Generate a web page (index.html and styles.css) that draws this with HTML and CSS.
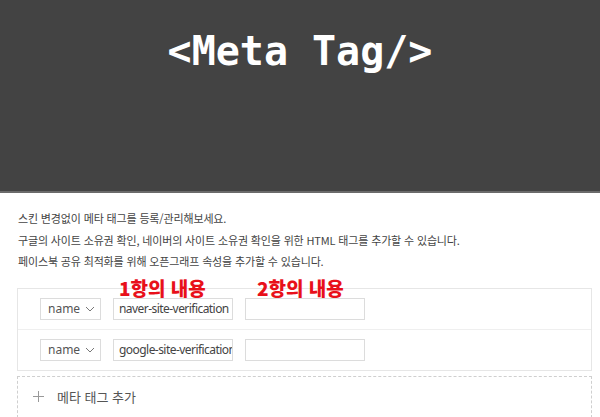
FILE: index.html
```html
<!DOCTYPE html>
<html lang="ko">
<head>
  <meta charset="UTF-8" />
  <title>Meta Tag</title>
  <meta name="viewport" content="width=device-width, initial-scale=1.0" />
  <link rel="stylesheet" href="styles.css">
</head>
<body>

  <div class="banner">
    <h1>&lt;Meta Tag/&gt;</h1>
  </div>

  <div class="content">
    <div class="intro">
      <p>스킨 변경없이 메타 태그를 등록/관리해보세요.</p>
      <p>구글의 사이트 소유권 확인, 네이버의 사이트 소유권 확인을 위한 HTML 태그를 추가할 수 있습니다.</p>
      <p>페이스북 공유 최적화를 위해 오픈그래프 속성을 추가할 수 있습니다.</p>
    </div>

    <div class="tag-list">
      <span class="note note-1">1항의 내용</span>
      <span class="note note-2">2항의 내용</span>

      <div class="tag-row">
        <div class="select">
          <span>name</span>
          <svg width="10" height="6" viewBox="0 0 10 6"><path d="M1 1l4 4 4-4" fill="none" stroke="#777" stroke-width="1"/></svg>
        </div>
        <input class="field" type="text" value="naver-site-verification" />
        <input class="field" type="text" value="" />
      </div>

      <div class="tag-row">
        <div class="select">
          <span>name</span>
          <svg width="10" height="6" viewBox="0 0 10 6"><path d="M1 1l4 4 4-4" fill="none" stroke="#777" stroke-width="1"/></svg>
        </div>
        <input class="field" type="text" value="google-site-verification" />
        <input class="field" type="text" value="" />
      </div>
    </div>

    <div class="add-tag">
      <svg class="plus" width="11" height="11" viewBox="0 0 11 11"><path d="M5.5 0v11M0 5.5h11" stroke="#999" stroke-width="1"/></svg>
      <span>메타 태그 추가</span>
    </div>
  </div>

</body>
</html>
```

FILE: styles.css
```css
body {
  margin: 0;
  font-family: 'Noto Sans CJK KR', 'Noto Sans', sans-serif;
  color: #444;
  background: #fff;
}
.banner {
  height: 191px;
  background: #434343;
  border-bottom: 2px solid #6b6b6b;
}
.banner h1 {
  margin: 0;
  padding-top: 28px;
  text-align: center;
  font-family: 'DejaVu Sans Mono', monospace;
  font-weight: bold;
  font-size: 40px;
  color: #fff;
}
.content {
  padding: 15px 8px 0 17px;
}
.intro {
  padding-left: 1px;
  font-size: 11px;
  letter-spacing: -0.15px;
  line-height: 21.5px;
}
.intro p {
  margin: 0;
}
.tag-list {
  position: relative;
  margin-top: 15px;
  border: 1px solid #e6e6e6;
}
.note {
  position: absolute;
  top: -11px;
  font-size: 19px;
  font-weight: 900;
  line-height: 1;
  color: #e8101a;
}
.note-1 {
  left: 101px;
}
.note-2 {
  left: 239px;
}
.tag-row {
  display: flex;
  align-items: center;
  gap: 12px;
  height: 40px;
  padding-left: 22px;
}
.tag-row + .tag-row {
  border-top: 1px solid #efefef;
}
.select {
  display: flex;
  align-items: center;
  justify-content: space-between;
  box-sizing: border-box;
  width: 61px;
  height: 22px;
  padding: 0 5px 0 7px;
  border: 1px solid #dcdcdc;
  font-family: 'Noto Sans', sans-serif;
  font-size: 12px;
  color: #555;
}
.field {
  box-sizing: border-box;
  width: 120px;
  height: 22px;
  padding: 0 0 0 5px;
  border: 1px solid #dcdcdc;
  font-family: 'Noto Sans', sans-serif;
  font-size: 12px;
  letter-spacing: -0.55px;
  color: #444;
  outline: none;
}
.add-tag {
  display: flex;
  align-items: center;
  gap: 13px;
  height: 40px;
  margin-top: 5px;
  padding-left: 15px;
  border: 1px dashed #cfcfcf;
  font-size: 13px;
  color: #555;
}
```
